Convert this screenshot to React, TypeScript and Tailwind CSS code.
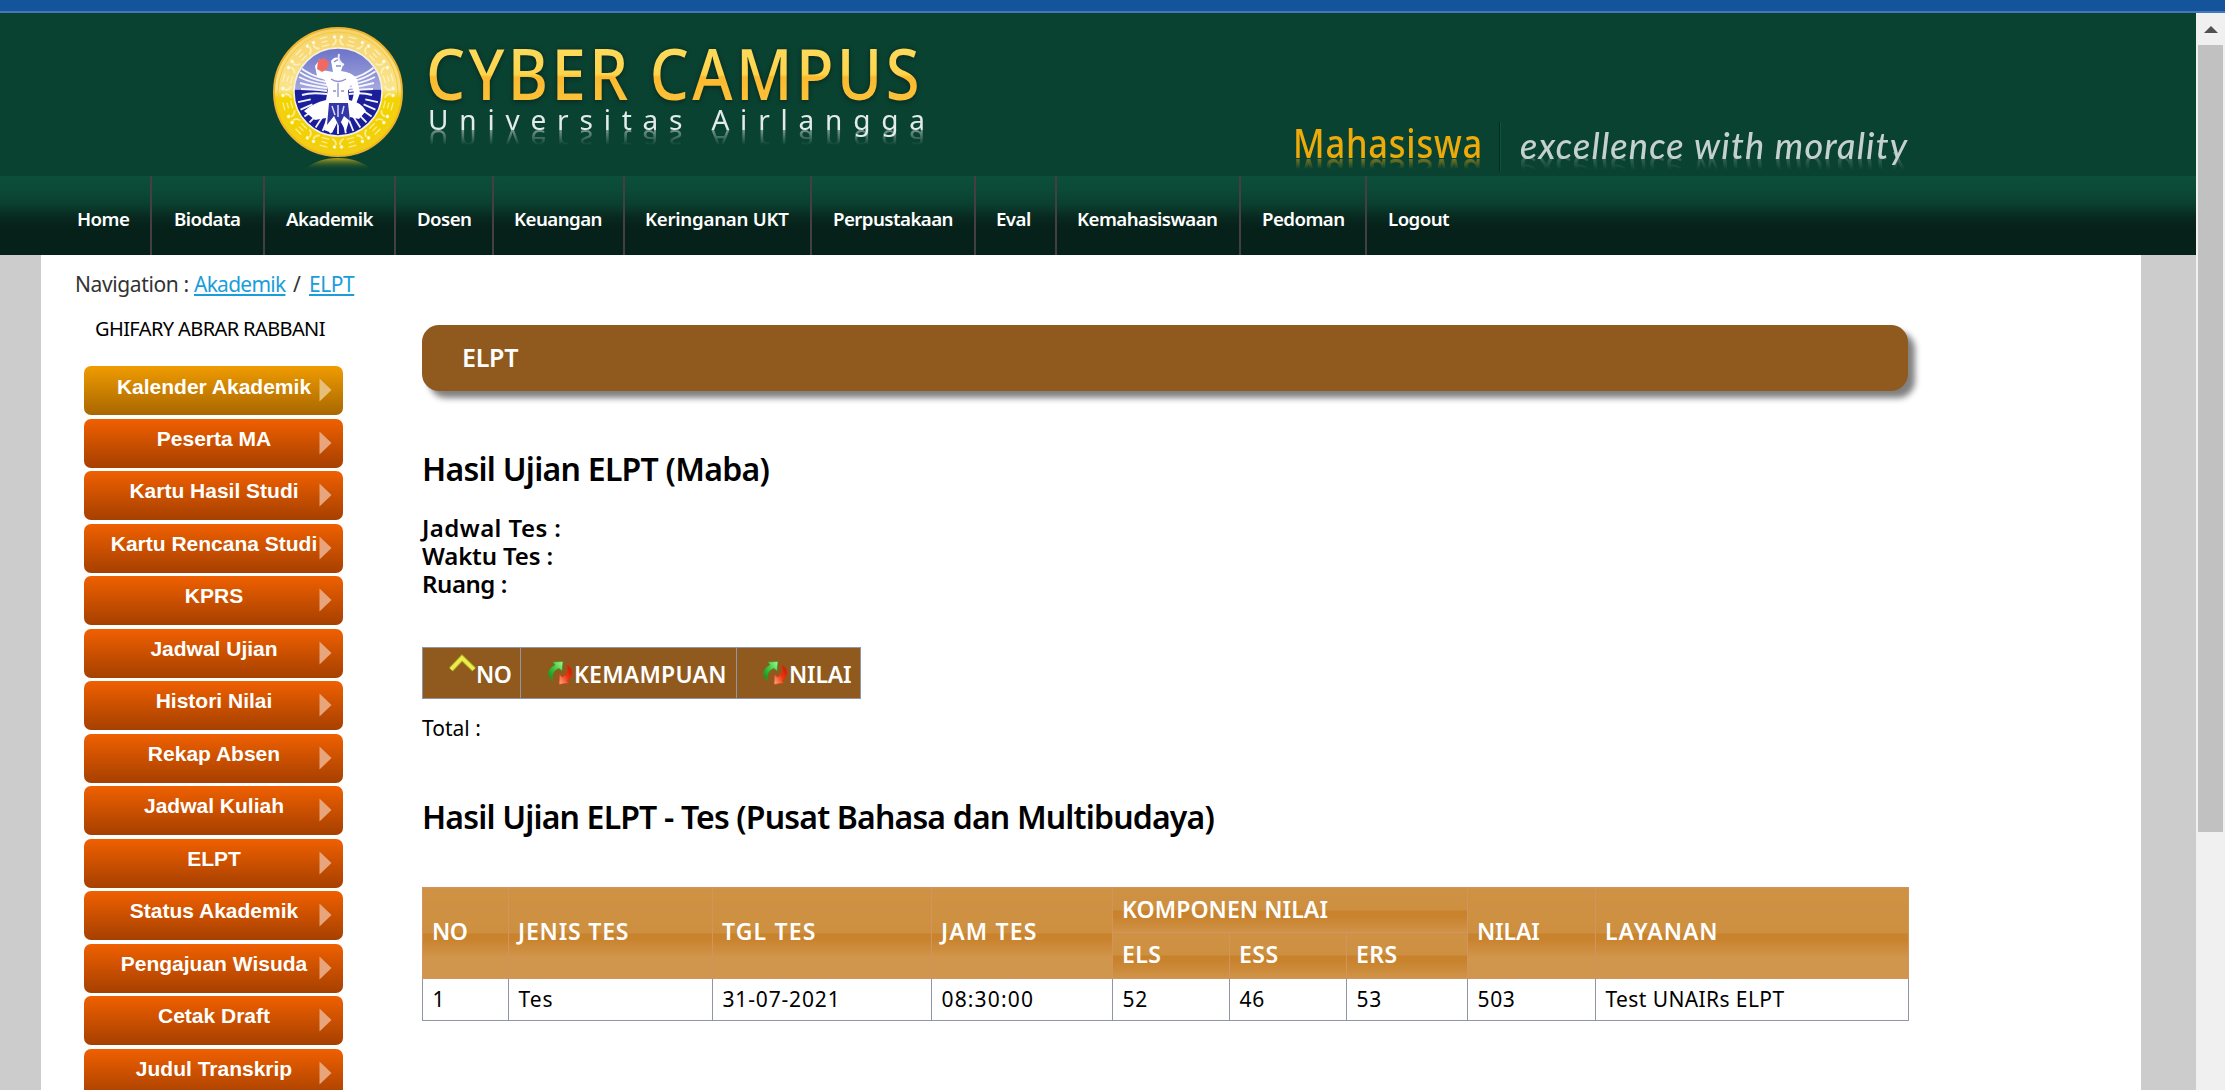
const menu = [
  { label: 'Home', cell: 'w-[150px] pl-[77px]' },
  { label: 'Biodata', cell: 'w-[113px] pl-[22px]' },
  { label: 'Akademik', cell: 'w-[131px] pl-[21px]' },
  { label: 'Dosen', cell: 'w-[98px] pl-[21px]' },
  { label: 'Keuangan', cell: 'w-[131px] pl-[20px]' },
  { label: 'Keringanan UKT', cell: 'w-[187px] pl-[20px] tracking-[-0.014em]' },
  { label: 'Perpustakaan', cell: 'w-[164px] pl-[21px]' },
  { label: 'Eval', cell: 'w-[81px] pl-[20px]' },
  { label: 'Kemahasiswaan', cell: 'w-[184px] pl-[20px]' },
  { label: 'Pedoman', cell: 'w-[126px] pl-[21px]' },
  { label: 'Logout', cell: 'pl-[21px]' },
];

const sideLinks = [
  'Kalender Akademik',
  'Peserta MA',
  'Kartu Hasil Studi',
  'Kartu Rencana Studi',
  'KPRS',
  'Jadwal Ujian',
  'Histori Nilai',
  'Rekap Absen',
  'Jadwal Kuliah',
  'ELPT',
  'Status Akademik',
  'Pengajuan Wisuda',
  'Cetak Draft',
  'Judul Transkrip',
];

const result = [
  { value: '1', tracking: '' },
  { value: 'Tes', tracking: 'tracking-[0.045em]' },
  { value: '31-07-2021', tracking: 'tracking-[0.04em]' },
  { value: '08:30:00', tracking: 'tracking-[0.055em]' },
  { value: '52', tracking: 'tracking-[0.03em]' },
  { value: '46', tracking: 'tracking-[0.03em]' },
  { value: '53', tracking: 'tracking-[0.03em]' },
  { value: '503', tracking: 'tracking-[0.03em]' },
  { value: 'Test UNAIRs ELPT', tracking: 'tracking-[0.019em]' },
];

const columnWidths = [
  'w-[86px]', 'w-[204px]', 'w-[219px]', 'w-[181px]', 'w-[117px]',
  'w-[117px]', 'w-[121px]', 'w-[128px]', 'w-[313px]',
];

const headCell =
  'border border-[#d3935f] px-[9px] pt-0 pb-[3px] text-left align-middle font-semibold bg-[linear-gradient(to_bottom,#cf9143_0,#cd8f40_50%,#c9822c_50%,#c9832e_calc(50%+6px),#d1964d_calc(50%+25px),#d1964d_100%)]';

function Crest() {
  const beads = Array.from({ length: 24 }, (_, i) => i * 15);
  const feathers = [0, 1, 2, 3, 4, 5];
  return (
    <svg viewBox="0 0 130 148" className="h-[148px] w-[130px]">
      <defs>
        <linearGradient id="ring" x1="0" y1="0" x2="0" y2="1">
          <stop offset="0" stopColor="#f6d36a" />
          <stop offset="0.48" stopColor="#fae48c" />
          <stop offset="0.55" stopColor="#f3d400" />
          <stop offset="1" stopColor="#f2cf08" />
        </linearGradient>
        <linearGradient id="field" x1="0" y1="0" x2="0" y2="1">
          <stop offset="0" stopColor="#6c72c8" />
          <stop offset="0.47" stopColor="#a4a8de" />
          <stop offset="0.48" stopColor="#1c1f9c" />
          <stop offset="1" stopColor="#1a1d98" />
        </linearGradient>
        <linearGradient id="mirror" x1="0" y1="0" x2="0" y2="1">
          <stop offset="0" stopColor="#b5a61c" />
          <stop offset="1" stopColor="#0a4232" stopOpacity="0" />
        </linearGradient>
        <clipPath id="disc">
          <circle cx="65" cy="65" r="43" />
        </clipPath>
      </defs>
      <path d="M31 143 Q44 131 65 131 Q86 131 99 143 Z" fill="url(#mirror)" />
      <circle cx="65" cy="65" r="64" fill="url(#ring)" stroke="#efb22e" strokeWidth="2" />
      <circle cx="65" cy="65" r="60" fill="none" stroke="#f5c93f" strokeWidth="1" />
      {beads.map((a) => (
        <g key={a} transform={`rotate(${a} 65 65)`} fill="none" stroke="#fffbe0" strokeOpacity="0.65">
          {a % 30 === 0 ? (
            <>
              <circle cx="61.5" cy="10" r="1.4" fill="#fffbe0" strokeWidth="1" />
              <circle cx="68.5" cy="10" r="1.4" fill="#fffbe0" strokeWidth="1" />
              <path d="M63 12 Q63 17 59 18 M67 12 Q67 17 71 18" strokeWidth="1.8" />
            </>
          ) : (
            <path d="M61 9 H69 M62 13 H68 M61 17 H69" strokeWidth="1.3" />
          )}
        </g>
      ))}
      <circle cx="65" cy="65" r="44" fill="url(#field)" stroke="#f4f1e2" strokeWidth="1.5" />
      <g clipPath="url(#disc)">
        <g stroke="#f5f5ff" strokeWidth="1.9" fill="none">
          {feathers.map((i) => (
            <g key={i}>
              <path d={`M54 ${52 + i * 3} Q38 ${50 + i * 3} ${24 + i} ${38 + i * 6}`} />
              <path d={`M76 ${52 + i * 3} Q90 ${50 + i * 3} ${104 - i} ${38 + i * 6}`} />
            </g>
          ))}
          {Array.from({ length: 15 }, (_, i) => {
            const a = ((i * 11 + 13) * Math.PI) / 180;
            return (
              <path
                key={i}
                strokeWidth="1.8"
                d={`M${65 + 28 * Math.cos(a)} ${66 + 28 * Math.sin(a)} L${65 + 41 * Math.cos(a)} ${66 + 41 * Math.sin(a)}`}
              />
            );
          })}
        </g>
        <path
          fill="#ffffff"
          d="M58 34 Q62 28 67 32 L70 38 L68 44 Q79 45 84 52 L87 66 L83 77 L79 74 L81 66 L78 57 L75 64 L76 73 Q88 75 93 84 L86 92 L77 90 L73 104 L66 92 L59 106 L51 103 L53 91 L42 93 L31 84 Q40 76 53 73 L55 62 L52 53 L44 49 L42 39 L47 32 L49 43 L60 45 Z"
        />
        <path d="M56 76 L75 76 L77 94 L71 89 L66 99 L61 89 L54 98 Z" fill="#3236a6" />
        <path d="M59 79 L62 88 M65 78 V90 M71 79 L69 87" stroke="#d8d9f6" strokeWidth="1.5" />
        <path d="M61 35 Q65 31 69 34 M63 39 L68 39 M58 52 Q65 57 73 52 M65 56 V70 M60 64 H63 M68 64 H71" stroke="#8a8dcc" strokeWidth="1.3" fill="none" />
        <path d="M66 27 Q64 35 71 38" stroke="#eeeefe" strokeWidth="2" fill="none" />
      </g>
      <path d="M45 33 L51 31 L56 35 L54 42 L49 45 L44 42 Z" fill="#ee6a63" />
    </svg>
  );
}

function SwapIcon() {
  return (
    <svg viewBox="0 0 26 26" className="h-[26px] w-[26px] shrink-0">
      <defs>
        <linearGradient id="swapGreen" x1="0" y1="1" x2="1" y2="0">
          <stop offset="0" stopColor="#12801c" />
          <stop offset="0.5" stopColor="#3fc23c" />
          <stop offset="1" stopColor="#a8fa90" />
        </linearGradient>
        <linearGradient id="swapRed" x1="1" y1="0" x2="0" y2="1">
          <stop offset="0" stopColor="#b81400" />
          <stop offset="0.5" stopColor="#ee3510" />
          <stop offset="1" stopColor="#ffb184" />
        </linearGradient>
      </defs>
      <path d="M6 2 L16 1.5 L15 11 L12 8.5 C7.5 10 4.5 14 5.5 20.5 C0 17 -0.5 9 8 5 Z" fill="url(#swapGreen)" stroke="#2c9a2c" strokeWidth="0.6" />
      <path d="M19.5 4.5 C27 8.5 27 16.5 20 20.5 L22 23 L12 24.5 L12.5 14.5 L15.5 17 C20 15 21.5 10 19.5 4.5 Z" fill="url(#swapRed)" stroke="#d63a18" strokeWidth="0.6" />
    </svg>
  );
}

function Header() {
  return (
    <header className="flex h-[163px] overflow-hidden bg-[#0a4232] pl-[273px]">
      <div className="pt-[14px]">
        <Crest />
      </div>
      <div className="ml-[23px] w-[520px] whitespace-nowrap pt-[25px]">
        <div className="w-[600px] origin-left scale-x-[0.88] bg-[linear-gradient(to_bottom,#fdd95a_20%,#fdd44c_52%,#fbb92e_56%,#fbc23a_90%)] bg-clip-text text-[70px] font-medium leading-[70px] tracking-[0.055em] text-transparent drop-shadow-[0_1px_3px_rgba(0,0,0,0.45)] [word-spacing:-0.02em]">
          CYBER CAMPUS
        </div>
        <div className="ml-[2px] mt-[-3px] w-[510px] text-[28px] leading-[28px] tracking-[0.386em] text-[#e3ebe8] [-webkit-box-reflect:below_-6px_linear-gradient(transparent_35%,rgba(0,0,0,0.6))]">
          Universitas Airlangga
        </div>
      </div>
      <div className="ml-[347px] flex items-start whitespace-nowrap pt-[110px]">
        <div className="w-[206px]">
          <div className="w-[230px] origin-left scale-x-[0.86] text-[40px] font-medium leading-[40px] tracking-[0.024em] text-[#eeaa08] [-webkit-box-reflect:below_-9px_linear-gradient(transparent_62%,rgba(0,0,0,0.7))]">
            Mahasiswa
          </div>
        </div>
        <div className="mt-[-1px] h-[50px] w-[2px] border-l border-r border-l-[#05291e] border-r-[#07573e]" />
        <div className="ml-[19px] mt-[4px] font-[Lato] text-[36px] font-medium italic leading-[36px] tracking-[0.033em] text-[#c5d1cc] [-webkit-box-reflect:below_-11px_linear-gradient(transparent_50%,rgba(0,0,0,0.35))]">
          excellence with morality
        </div>
      </div>
    </header>
  );
}

function MainMenu() {
  return (
    <nav className="flex h-[79px] whitespace-nowrap bg-[linear-gradient(to_bottom,#0b4f3a_0,#0b4a36_18%,#0a3f2e_36%,#08291f_52%,#06211a_66%,#06211a_100%)] text-[18.7px] font-semibold tracking-[-0.03em] text-white">
      {menu.map((item, i) => (
        <div key={item.label} className={`flex items-center pt-[8px] ${item.cell} ${i > 0 ? 'border-l-2 border-[#463f42]' : ''}`}>
          {item.label}
        </div>
      ))}
    </nav>
  );
}

function Sidebar() {
  return (
    <aside className="w-[381px] shrink-0">
      <div className="ml-[54px] mt-[17px] whitespace-nowrap text-[20px] leading-[28px] tracking-[-0.03em] text-black">
        GHIFARY ABRAR RABBANI
      </div>
      <div className="ml-[43px] mt-[23px] flex flex-col gap-[3.5px]">
        {sideLinks.map((label, i) => (
          <div
            key={label}
            className={`relative h-[49px] w-[259px] shrink-0 rounded-[7px] bg-gradient-to-b pl-px text-center font-[Liberation_Sans,Arial,sans-serif] text-[21px] font-bold text-white ${
              i === 0 ? 'from-[#f09c00] to-[#a86700] leading-[41px]' : 'from-[#f06000] to-[#a64000] leading-[40px]'
            }`}
          >
            {label}
            <svg viewBox="0 0 13 24" className="absolute right-[11px] top-[12px] h-6 w-[13px]">
              <path d="M0.5 0.5 L12.5 12 L0.5 23.5 Z" fill={i === 0 ? '#e6c078' : '#e8a57c'} />
            </svg>
          </div>
        ))}
      </div>
    </aside>
  );
}

function SkillTable() {
  return (
    <div className="mt-[49px] flex h-[52px] w-[439px] border border-[#9096a4] bg-[#905a1f] text-[23px] font-semibold text-white">
      <div className="flex w-[98px] items-center border-r border-[#9096a4] pl-[26px] pt-[3px]">
        <svg viewBox="0 0 27 18" className="mb-[24px] h-[18px] w-[27px] shrink-0">
          <path d="M2 15.5 L13 4 L25 15.5" fill="none" stroke="#a3a222" strokeWidth="5.5" />
          <path d="M2 15.5 L13 4 L25 15.5" fill="none" stroke="#ecec4a" strokeWidth="3.8" />
        </svg>
        <span className="tracking-[-0.02em]">NO</span>
      </div>
      <div className="flex w-[216px] items-center border-r border-[#9096a4] pl-[26px] pt-[3px]">
        <span className="mb-[4px] flex"><SwapIcon /></span>
        <span className="ml-[1px] tracking-[0.01em]">KEMAMPUAN</span>
      </div>
      <div className="flex items-center pl-[25px] pt-[3px]">
        <span className="mb-[4px] flex"><SwapIcon /></span>
        <span className="ml-[1px] tracking-[-0.008em]">NILAI</span>
      </div>
    </div>
  );
}

function ScoreTable() {
  return (
    <table className="mt-[50px] w-[1486px] table-fixed border-collapse whitespace-nowrap text-[23px] text-white">
      <colgroup>
        {columnWidths.map((w, i) => (
          <col key={i} className={w} />
        ))}
      </colgroup>
      <thead className="border-t border-[#9096a4] leading-none">
        <tr className="h-[45px]">
          <th rowSpan={2} className={`${headCell} tracking-[-0.02em]`}>NO</th>
          <th rowSpan={2} className={`${headCell} tracking-[0.036em]`}>JENIS TES</th>
          <th rowSpan={2} className={`${headCell} tracking-[0.05em]`}>TGL TES</th>
          <th rowSpan={2} className={`${headCell} tracking-[0.05em]`}>JAM TES</th>
          <th colSpan={3} className={`${headCell} pb-px tracking-[0.004em]`}>KOMPONEN NILAI</th>
          <th rowSpan={2} className={`${headCell} tracking-[-0.005em]`}>NILAI</th>
          <th rowSpan={2} className={`${headCell} tracking-[0.044em]`}>LAYANAN</th>
        </tr>
        <tr className="h-[46px]">
          <th className={`${headCell} tracking-[0.02em]`}>ELS</th>
          <th className={`${headCell} tracking-[0.02em]`}>ESS</th>
          <th className={`${headCell} tracking-[0.02em]`}>ERS</th>
        </tr>
      </thead>
      <tbody>
        <tr className="h-[42px] text-[21px] leading-none text-black">
          {result.map((cell, i) => (
            <td key={i} className={`border border-[#9096a4] px-[9.5px] py-0 ${cell.tracking}`}>{cell.value}</td>
          ))}
        </tr>
      </tbody>
    </table>
  );
}

function Scrollbar() {
  return (
    <div className="flex w-[29px] shrink-0 flex-col bg-[#f0f0f0] px-[2px]">
      <div className="flex h-8 items-center justify-center">
        <svg viewBox="0 0 14 7" className="h-[7px] w-[14px]">
          <path d="M7 0 L14 7 H0 Z" fill="#505050" />
        </svg>
      </div>
      <div className="h-[787px] bg-[#c1c1c1]" />
    </div>
  );
}

export default function App() {
  return (
    <div className="flex h-[1090px] w-[2225px] flex-col overflow-hidden bg-white font-[Noto_Sans,sans-serif]">
      <div className="h-[13px] shrink-0 border-b-2 border-[#4479b8] bg-[#14549b]" />
      <div className="flex h-[1077px]">
        <div className="w-[2196px] overflow-hidden bg-[#ccc]">
          <Header />
          <MainMenu />
          <div className="ml-[41px] h-[835px] w-[2100px] bg-white">
            <div className="flex pl-[34px] pt-[15px] text-[21px] leading-[28px] tracking-[-0.022em] text-[#333]">
              <span className="w-[119px] tracking-[-0.018em]">Navigation :</span>
              <a className="w-[91px] tracking-[-0.036em] text-[#1b9ddb] underline decoration-2 underline-offset-[2px]">Akademik</a>
              <span className="ml-[8px] w-[16px]">/</span>
              <a className="text-[#1b9ddb] underline decoration-2 underline-offset-[2px]">ELPT</a>
            </div>
            <div className="flex">
              <Sidebar />
              <main className="w-[1486px] pt-[27px] text-black">
                <div className="flex h-[66px] items-center rounded-[17px] bg-[#905a1f] pl-[40px] text-[25px] font-semibold tracking-[-0.01em] text-white shadow-[7px_7px_6px_#808080]">
                  ELPT
                </div>
                <h2 className="mt-[58px] text-[32px] font-semibold leading-[40px] tracking-[-0.023em]">
                  Hasil Ujian ELPT (Maba)
                </h2>
                <div className="mt-[25px] text-[24px] font-semibold leading-[28px]">
                  <p className="tracking-[0.018em]">Jadwal Tes :</p>
                  <p className="tracking-[-0.006em]">Waktu Tes :</p>
                  <p className="tracking-[-0.018em]">Ruang :</p>
                </div>
                <SkillTable />
                <p className="mt-[15px] text-[21px] leading-[28px]">Total :</p>
                <h2 className="mt-[55px] text-[32px] font-semibold leading-[40px] tracking-[-0.026em]">
                  Hasil Ujian ELPT - Tes (Pusat Bahasa dan Multibudaya)
                </h2>
                <ScoreTable />
              </main>
            </div>
          </div>
        </div>
        <Scrollbar />
      </div>
    </div>
  );
}
